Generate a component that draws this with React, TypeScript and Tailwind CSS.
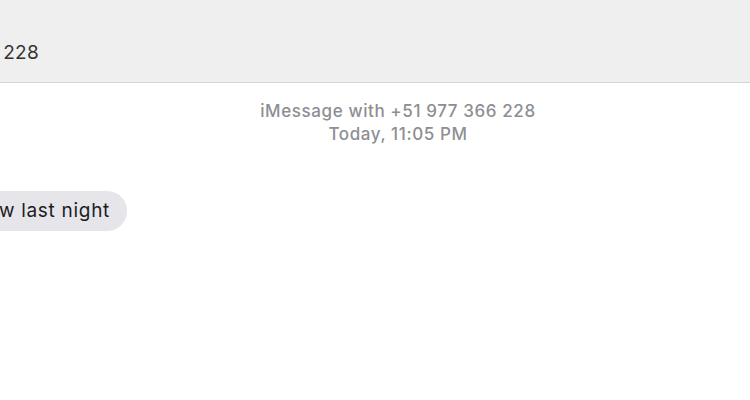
import React from "react";

export default function App() {
  return (
    <div className="w-[750px] h-[400px] overflow-hidden bg-white" style={{ fontFamily: "Inter, 'Noto Sans', sans-serif" }}>
      {/* header */}
      <div className="h-[83px] bg-[#efefef] border-b border-[#d4d4d4] flex items-end pb-[20px]">
        <div className="w-[39px] flex justify-end">
          <span className="whitespace-nowrap text-[19px] text-[#333333] leading-none tracking-[0.3px]">To: +51 977 366 228</span>
        </div>
      </div>

      {/* conversation meta */}
      <div className="flex flex-col items-center pl-[46px] pt-[17px] text-[17px] leading-[23px] font-medium tracking-[0.6px] text-[#8e8e93]">
        <p>iMessage with +51 977 366 228</p>
        <p>Today, 11:05 PM</p>
      </div>

      {/* incoming bubble */}
      <div className="mt-[45px] w-[127px] flex justify-end">
        <div className="whitespace-nowrap h-[40px] rounded-[20px] bg-[#e5e5ea] pl-[16px] pr-[17px] flex items-center text-[19px] tracking-[0.7px] text-[#1c1c1e]">
          Did you see the show last night
        </div>
      </div>
    </div>
  );
}
